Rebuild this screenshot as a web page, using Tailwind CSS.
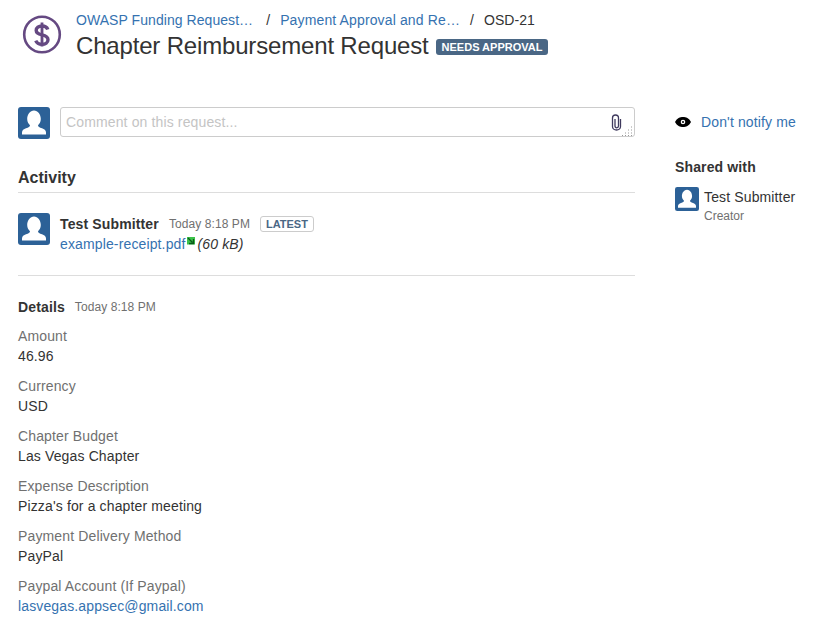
<!DOCTYPE html>
<html>
<head>
<script src="https://cdn.jsdelivr.net/npm/@tailwindcss/browser@4"></script>
</head>
<body class="bg-white">
<div class="w-[824px] h-[630px] overflow-hidden font-['Liberation_Sans',sans-serif] text-[14px] leading-[20px] tracking-[0.135px] text-[#333]">
  <header class="flex h-[107px] pl-[20px] pt-[10px]">
    <svg class="w-[44px] h-[44px] mt-[4px] shrink-0" viewBox="0 0 44 44">
      <circle cx="22" cy="20.500" r="17.800" fill="none" stroke="#654982" stroke-width="2.600"/>
      <path d="M27.800 15.500c-.8-2.300-3-3.500-5.800-3.500-3.400 0-5.800 1.700-5.800 4.400 0 2.900 2.500 3.700 5.800 4.500 3.400.8 6 1.800 6 4.800 0 2.900-2.600 4.600-6 4.600-3 0-5.300-1.300-6.200-3.700" fill="none" stroke="#654982" stroke-width="3.400"/>
      <path d="M22 8.500v24" stroke="#654982" stroke-width="2.800"/>
    </svg>
    <div class="ml-[12px]">
      <nav class="flex h-[20px] items-center whitespace-nowrap tracking-[0.06px]">
        <a class="text-[#3572b0]">OWASP Funding Request…</a>
        <span class="ml-[13px] text-[#333]">/</span>
        <a class="ml-[10px] text-[#3572b0] tracking-[0.135px]">Payment Approval and Re…</a>
        <span class="ml-[10px] text-[#333]">/</span>
        <span class="ml-[10px] text-[#333]">OSD-21</span>
      </nav>
      <div class="flex items-center mt-[1px] h-[30px]">
        <h1 class="text-[24px] leading-[30px] font-normal tracking-[-0.17px] whitespace-nowrap">Chapter Reimbursement Request</h1>
        <span class="ml-[7px] mt-[1px] h-[16px] px-[6px] rounded-[3px] bg-[#4a6785] text-white text-[11px] leading-[16px] font-bold tracking-normal whitespace-nowrap">NEEDS APPROVAL</span>
      </div>
    </div>
  </header>
  <div class="flex pl-[18px]">
    <main class="w-[617px] shrink-0">
      <div class="flex gap-[10px]">
        <svg class="w-[32px] h-[32px] shrink-0" viewBox="0 0 32 32">
          <rect width="32" height="32" rx="3" fill="#2c6197"/>
          <path d="M4 27.500v-2c0-2.300 1.800-3.500 4-4.200 2.500-.8 4-1.500 4-3-1.500-1.500-2.800-3.500-2.800-6.300C9.200 7.500 12.200 3.500 16 3.500s6.800 4 6.800 8.500c0 2.800-1.300 4.800-2.800 6.300 0 1.500 1.500 2.200 4 3 2.200.7 4 1.900 4 4.200v2z" fill="#fff"/>
        </svg>
        <div class="relative w-[575px] h-[30px] border border-[#ccc] rounded-[3px] px-[5px] leading-[28px] text-[#c4c4c4]">
          Comment on this request...
          <svg class="absolute right-[12px] top-[6px] w-[11px] h-[17px]" viewBox="0 0 11 17">
            <path d="M9.500 5v7.500c0 2-1.800 3.500-4 3.500s-4-1.500-4-3.500V4c0-1.700 1.300-3 3-3s3 1.300 3 3v8c0 1-.8 1.800-1.800 1.800S4 13 4 12V5" fill="none" stroke="#3f3a5e" stroke-width="1.300"/>
          </svg>
          <svg class="absolute right-0 bottom-0 w-[12px] h-[10px]" viewBox="0 0 12 10">
            <path d="M9 1h1M6 4h1M9 4h1M3 7h1M6 7h1M9 7h1M0 9.500h1M3 9.500h1M6 9.500h1M9 9.500h1" stroke="#999" stroke-width="1"/>
          </svg>
        </div>
      </div>
      <h2 class="mt-[27px] text-[16px] leading-[24px] font-bold tracking-normal">Activity</h2>
      <div class="mt-[2px] border-t border-[#ddd]"></div>
      <div class="flex gap-[10px] mt-[20px]">
        <svg class="w-[32px] h-[32px] shrink-0" viewBox="0 0 32 32">
          <rect width="32" height="32" rx="3" fill="#2c6197"/>
          <path d="M4 27.500v-2c0-2.300 1.800-3.500 4-4.200 2.500-.8 4-1.500 4-3-1.500-1.500-2.800-3.500-2.800-6.300C9.200 7.500 12.200 3.500 16 3.500s6.800 4 6.800 8.500c0 2.800-1.300 4.800-2.800 6.300 0 1.500 1.500 2.200 4 3 2.200.7 4 1.900 4 4.200v2z" fill="#fff"/>
        </svg>
        <div class="pt-[1px]">
          <div class="flex items-center h-[20px] whitespace-nowrap">
            <span class="font-bold">Test Submitter</span>
            <span class="ml-[10px] text-[12px] tracking-[0.08px] text-[#707070]">Today 8:18 PM</span>
            <span class="ml-[10px] h-[16px] px-[5px] border border-[#ccc] rounded-[3px] text-[11px] leading-[14px] font-bold tracking-normal text-[#4a6785]">LATEST</span>
          </div>
          <div class="flex h-[20px] whitespace-nowrap">
            <a class="text-[#3572b0]">example-receipt.pdf</a>
            <svg class="w-[8px] h-[8px] mt-[3px] ml-[1px]" viewBox="0 0 8 8">
              <rect width="8" height="7.500" fill="#3cc24a"/>
              <path d="M1 1l4.500 4.500M6.500 2v4.500H2" fill="none" stroke="#0a5a1a" stroke-width="1.300"/>
            </svg>
            <em class="ml-[3px]">(60 kB)</em>
          </div>
        </div>
      </div>
      <div class="mt-[21px] border-t border-[#ddd]"></div>
      <div class="flex items-center mt-[21px] h-[20px]">
        <span class="font-bold">Details</span>
        <span class="ml-[10px] text-[12px] tracking-[0.08px] text-[#707070]">Today 8:18 PM</span>
      </div>
      <dl class="mt-[9px] flex flex-col gap-[10px]">
        <div><dt class="text-[#707070]">Amount</dt><dd>46.96</dd></div>
        <div><dt class="text-[#707070]">Currency</dt><dd>USD</dd></div>
        <div><dt class="text-[#707070]">Chapter Budget</dt><dd>Las Vegas Chapter</dd></div>
        <div><dt class="text-[#707070]">Expense Description</dt><dd>Pizza's for a chapter meeting</dd></div>
        <div><dt class="text-[#707070]">Payment Delivery Method</dt><dd>PayPal</dd></div>
        <div><dt class="text-[#707070]">Paypal Account (If Paypal)</dt><dd class="text-[#3572b0]">lasvegas.appsec@gmail.com</dd></div>
      </dl>
    </main>
    <aside class="ml-[40px] flex-1">
      <div class="flex items-center h-[30px]">
        <svg class="w-[16px] h-[10px]" viewBox="0 0 16 10">
          <path d="M0 5C2 1.200 5 0 8 0s6 1.200 8 5c-2 3.800-5 5-8 5S2 8.800 0 5z" fill="#000"/>
          <circle cx="8" cy="5" r="2.300" fill="#fff"/>
          <circle cx="8" cy="5" r="1" fill="#000"/>
        </svg>
        <a class="ml-[10px] text-[#3572b0] whitespace-nowrap">Don't notify me</a>
      </div>
      <h3 class="mt-[20px] font-bold leading-[20px]">Shared with</h3>
      <div class="flex gap-[5px] mt-[10px]">
        <svg class="w-[24px] h-[24px] shrink-0" viewBox="0 0 32 32">
          <rect width="32" height="32" rx="3" fill="#2c6197"/>
          <path d="M4 27.500v-2c0-2.300 1.800-3.500 4-4.200 2.500-.8 4-1.500 4-3-1.500-1.500-2.800-3.500-2.800-6.300C9.200 7.500 12.200 3.500 16 3.500s6.800 4 6.800 8.500c0 2.800-1.300 4.800-2.800 6.300 0 1.500 1.500 2.200 4 3 2.200.7 4 1.900 4 4.200v2z" fill="#fff"/>
        </svg>
        <div class="whitespace-nowrap">
          <div>Test Submitter</div>
          <div class="text-[12px] leading-[18px] tracking-normal text-[#707070]">Creator</div>
        </div>
      </div>
    </aside>
  </div>
</div>
</body>
</html>
